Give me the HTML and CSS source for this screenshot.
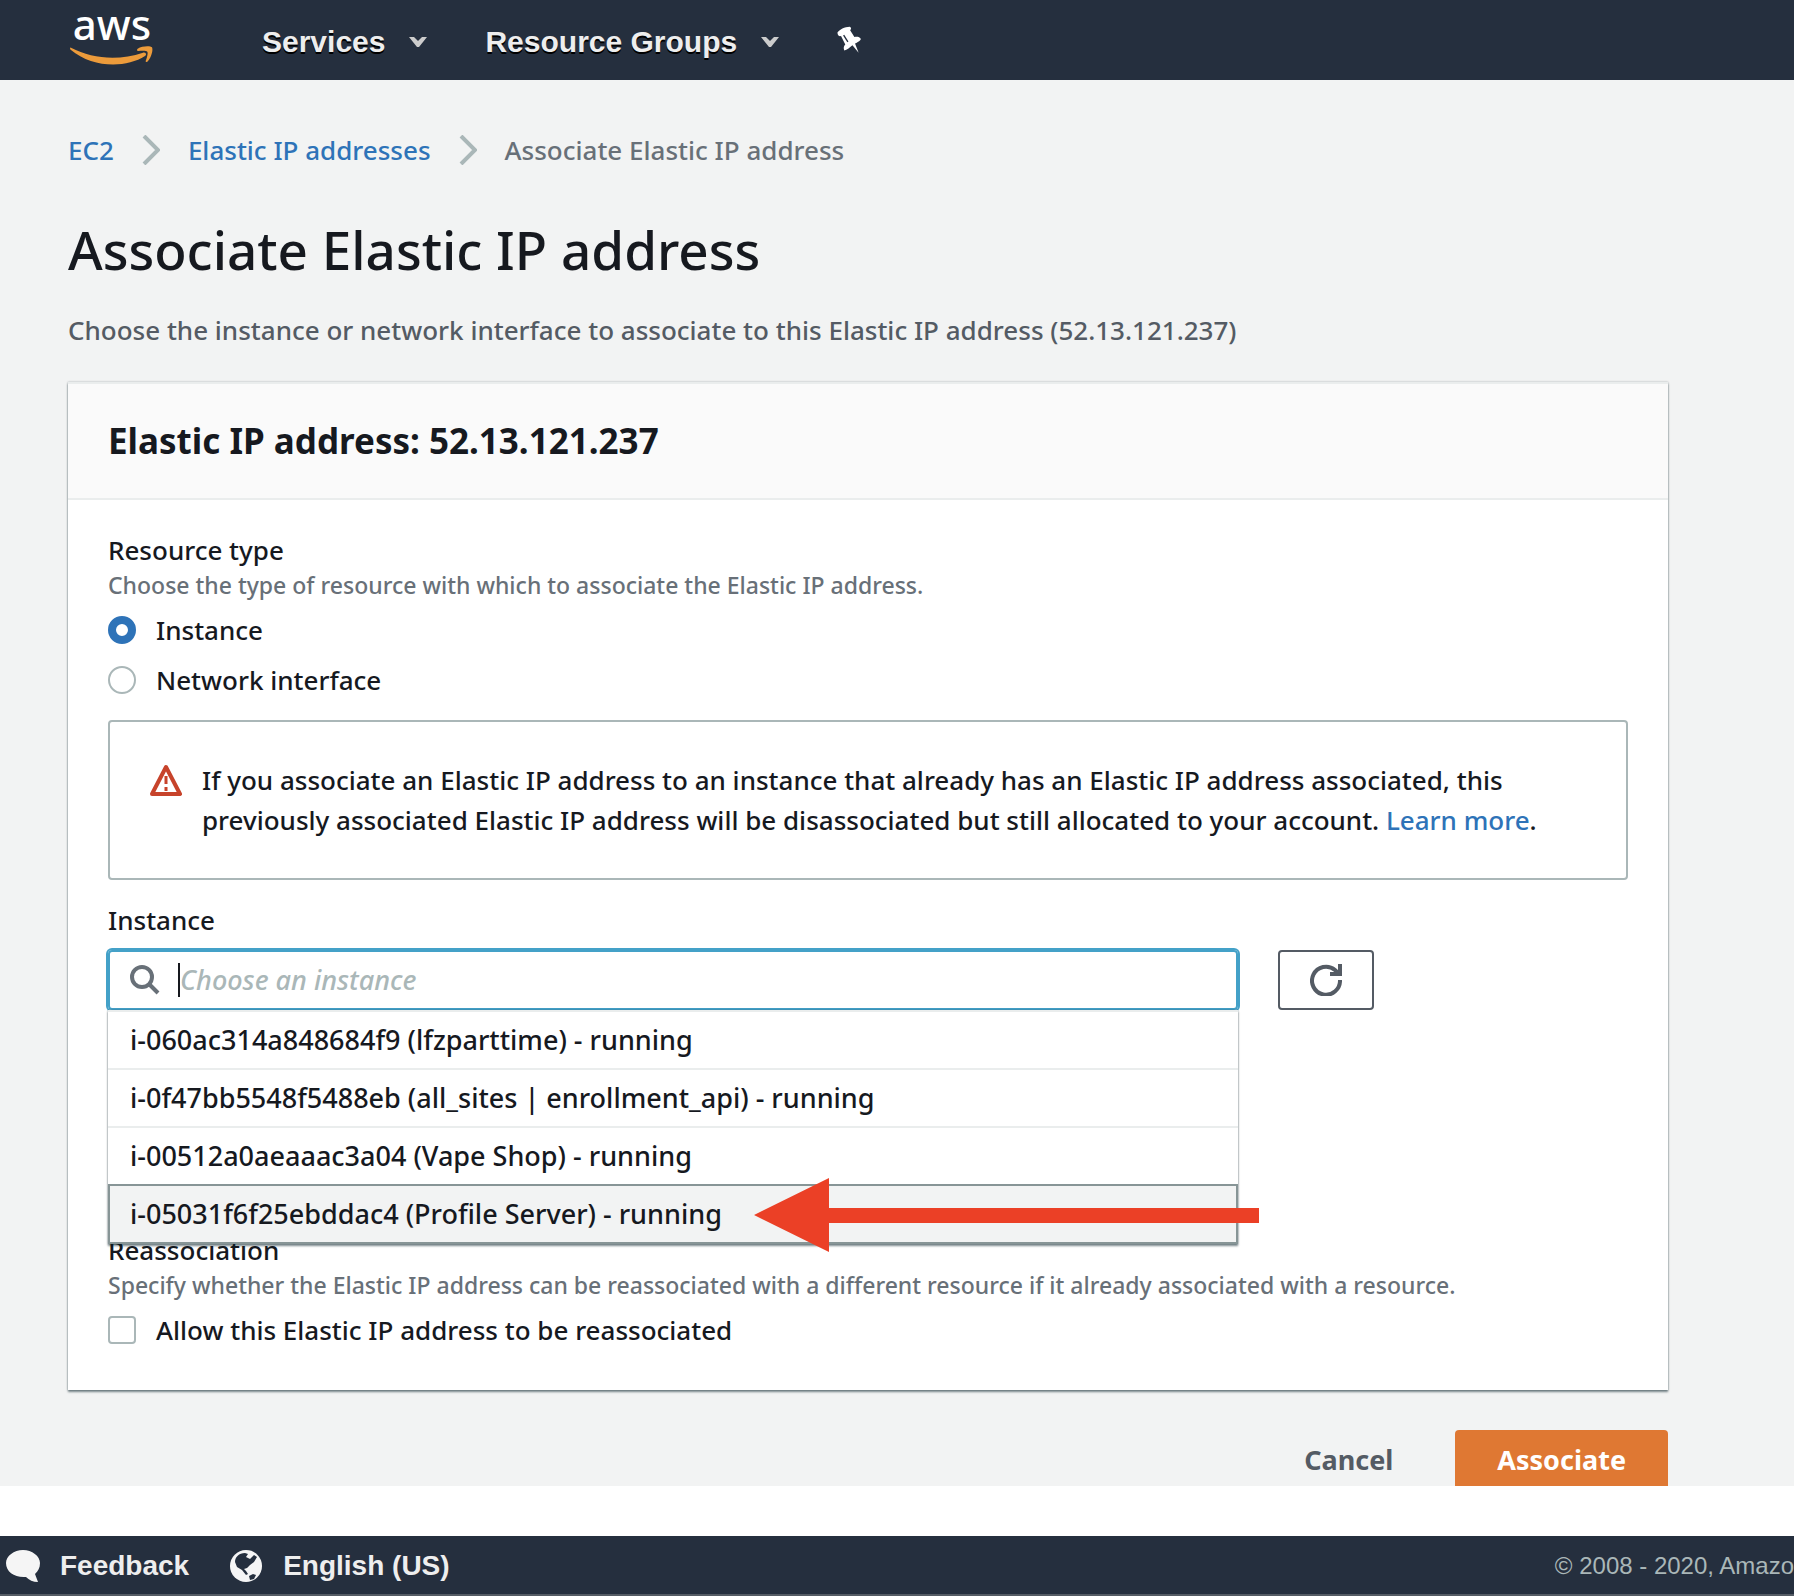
FILE: index.html
```html
<!DOCTYPE html>
<html lang="en">
<head>
<meta charset="utf-8">
<title>Associate Elastic IP address</title>
<link rel="stylesheet" href="styles.css">
</head>
<body>
<header class="topnav">
  <a class="logo" href="#" aria-label="aws">
    <span class="logo-word">aws</span>
    <svg class="logo-smile" viewBox="28 136 252 57" aria-hidden="true"><path d="M31 141C95 175 175 180 247 156c7-3 13 5 6 10C195 203 95 202 30 147c-3-3-2-7 1-6z"/><path d="M231 144c14-9 39-9 43-4 4 7-2 32-14 43-2 2-6 1-5-2 3-8 8-23 5-28-3-4-18-3-27-2-4 0-5-4-2-7z"/></svg>
  </a>
  <button class="nav-item" type="button">Services <svg class="caret" viewBox="0 0 18 12" aria-hidden="true"><path d="M0 1h5l4 4 4-4h5l-8 10H8z"/></svg></button>
  <button class="nav-item" type="button">Resource Groups <svg class="caret" viewBox="0 0 18 12" aria-hidden="true"><path d="M0 1h5l4 4 4-4h5l-8 10H8z"/></svg></button>
  <button class="pin" type="button" aria-label="Pin shortcuts"><svg viewBox="1346 48 76 86" aria-hidden="true"><path d="M1347 68c6-9 22-18 38-18 5 2 5 7 1 11l13 21c8-2 16-1 20 6-2 5-8 9-14 12l-4 2 11 28-19-23c-7 6-17 15-25 16-3-6-2-13 3-18l-13-26c-6 2-11-3-11-11z"/><path class="pin-line" d="M1366 76l13 21"/></svg></button>
</header>

<main class="content">
  <nav class="crumbs" aria-label="Breadcrumb">
    <a href="#">EC2</a>
    <svg class="chev" viewBox="0 0 18 30" aria-hidden="true"><path d="M2 1l14 14L2 29"/></svg>
    <a href="#">Elastic IP addresses</a>
    <svg class="chev" viewBox="0 0 18 30" aria-hidden="true"><path d="M2 1l14 14L2 29"/></svg>
    <span>Associate Elastic IP address</span>
  </nav>
  <h1>Associate Elastic IP address</h1>
  <p class="lead">Choose the instance or network interface to associate to this Elastic IP address (52.13.121.237)</p>

  <form class="form">
    <section class="card">
      <h2>Elastic IP address: 52.13.121.237</h2>
      <div class="card-body">
        <fieldset class="field">
          <legend>Resource type</legend>
          <p class="hint">Choose the type of resource with which to associate the Elastic IP address.</p>
          <label class="choice"><input type="radio" name="type" checked> Instance</label>
          <label class="choice"><input type="radio" name="type"> Network interface</label>
        </fieldset>

        <div class="alert">
          <svg class="warn" viewBox="0 0 32 32" aria-hidden="true"><path class="tri" d="M16 3L30 30H2z"/><path class="mark" d="M16 12v8M16 23v4"/></svg>
          <p>If you associate an Elastic IP address to an instance that already has an Elastic IP address associated, this previously associated Elastic IP address will be disassociated but still allocated to your account. <a href="#">Learn more</a>.</p>
        </div>

        <div class="field instance">
          <label for="instance">Instance</label>
          <div class="picker-row">
            <div class="picker">
              <div class="search">
                <svg class="glass" viewBox="0 0 30 30" aria-hidden="true"><circle cx="12" cy="12" r="10"/><path d="M19 19l9 9"/></svg>
                <span class="cursor"></span>
                <input id="instance" type="text" placeholder="Choose an instance">
              </div>
              <ul class="options">
                <li>i-060ac314a848684f9 (lfzparttime) - running</li>
                <li>i-0f47bb5548f5488eb (all_sites | enrollment_api) - running</li>
                <li>i-00512a0aeaaac3a04 (Vape Shop) - running</li>
                <li class="active">i-05031f6f25ebddac4 (Profile Server) - running
                  <svg class="arrow" viewBox="0 0 505 74" aria-hidden="true"><path d="M0 37L75 0v30h430v15H75v29z"/></svg>
                </li>
              </ul>
            </div>
            <button class="refresh" type="button" aria-label="Refresh"><svg viewBox="0 0 32 32" aria-hidden="true"><path d="M30 16a14 14 0 1 1-5-10l4 4"/><path d="M30 0v10H20"/></svg></button>
          </div>
        </div>

        <fieldset class="field reassoc">
          <legend>Reassociation</legend>
          <p class="hint">Specify whether the Elastic IP address can be reassociated with a different resource if it already associated with a resource.</p>
          <label class="choice"><input type="checkbox"> Allow this Elastic IP address to be reassociated</label>
        </fieldset>
      </div>
    </section>
    <div class="actions">
      <button class="btn" type="button">Cancel</button>
      <button class="btn primary" type="submit">Associate</button>
    </div>
  </form>
</main>

<footer class="footer">
  <a href="#"><svg class="ficon" viewBox="0 0 34 34" aria-hidden="true"><path d="M17 1c9 0 17 6 17 13 0 5-2 8-5 11l3 8c-5 0-9-2-12-5C9 29 0 23 0 14 0 7 8 1 17 1z"/></svg>Feedback</a>
  <a href="#"><svg class="ficon" viewBox="0 0 34 34" aria-hidden="true"><circle cx="17" cy="17" r="16"/><path class="land" d="M6 13c0-5 4-9 10-9l3 1-2 3 4 2 4-4 3 2-3 5-4 3-3 3-3 1 2 2 2 3-2 1-4-5-5-3zM20 27l4-2 3 1-2 4-4 1z"/></svg>English (US)</a>
  <small>© 2008 - 2020, Amazo</small>
</footer>
</body>
</html>
```
FILE: styles.css
```css
* { box-sizing: border-box; }

body {
  margin: 0;
  min-height: 100vh;
  display: flex;
  flex-direction: column;
  background: #fff;
  color: #16191f;
  font: 500 26px/40px "Noto Sans", "Open Sans", sans-serif;
  overflow-x: hidden;
}

h1, h2, p, ul, fieldset { margin: 0; padding: 0; border: 0; }
button, input { font: inherit; }
button { border: 0; background: none; padding: 0; cursor: pointer; }
a { color: #2e73b8; text-decoration: none; }

.topnav {
  display: flex;
  align-items: center;
  height: 80px;
  padding: 0 70px;
  background: #252f3e;
}
.logo { width: 84px; margin-right: 108px; padding-bottom: 14px; display: flex; flex-direction: column; align-items: center; }
.logo-word { color: #fff; font-size: 42px; line-height: 44px; }
.logo-smile { width: 84px; height: 19px; fill: #ec9b3b; }
.nav-item {
  display: flex;
  align-items: center;
  gap: 24px;
  margin-right: 58px;
  padding-top: 4px;
  color: #eee;
  font: bold 30px/32px "Liberation Sans", sans-serif;
  text-shadow: 0 2px 0 #000;
}
.caret { width: 18px; height: 12px; fill: #ccc; }
.pin { display: flex; }
.pin svg { width: 25px; height: 28px; fill: #fff; }
.pin-line { fill: none; stroke: #252f3e; stroke-width: 4; }

.content {
  flex: none;
  padding: 50px 68px 0;
  background: #f2f3f3;
}
.crumbs { display: flex; align-items: center; gap: 28px; color: #687078; }
.chev { width: 18px; height: 30px; fill: none; stroke: #aab7b8; stroke-width: 4; }
h1 { margin-top: 44px; font-size: 53px; line-height: 72px; font-weight: 500; }
.lead { margin-top: 24px; margin-bottom: 32px; color: #545b64; }

.form { max-width: 1600px; }
.card {
  background: #fff;
  border-top: 2px solid #eaeded;
  box-shadow: 0 2px 2px rgba(0, 28, 36, .5), 0 0 2px rgba(0, 28, 36, .3);
}
h2 {
  padding: 34px 40px;
  font-size: 35px;
  line-height: 46px;
  background: #fafafa;
  border-bottom: 2px solid #eaeded;
}
.card-body { padding: 30px 40px 40px; }
legend { padding: 0; }
.hint { color: #687078; font-size: 23px; line-height: 30px; }
.choice { display: flex; align-items: center; gap: 20px; margin-top: 10px; }
.choice input {
  appearance: none;
  width: 28px;
  height: 28px;
  margin: 0;
  border: 2px solid #aab7b8;
  border-radius: 4px;
  background: #fff;
}
.choice input[type="radio"] { border-radius: 50%; }
.choice input[type="radio"]:checked { border: 8px solid #2e73b8; }

.alert {
  display: flex;
  gap: 20px;
  margin-top: 20px;
  padding: 38px 40px;
  border: 2px solid #aab7b8;
  border-radius: 4px;
}
.warn { flex: none; width: 32px; height: 32px; margin-top: 4px; fill: none; stroke: #c7432b; stroke-width: 4; stroke-linejoin: round; }
.warn .mark { stroke-width: 3; }

.instance { margin-top: 20px; }
.instance label { display: block; }
.picker-row { display: flex; gap: 40px; margin-top: 10px; }
.picker { position: relative; flex: 0 1 1130px; font-size: 27px; }
.search {
  display: flex;
  align-items: center;
  height: 60px;
  padding: 0 20px;
  border: 2px solid #44a1c8;
  border-radius: 4px;
  box-shadow: 0 0 0 2px #44a1c8;
}
.glass { flex: none; width: 30px; height: 30px; margin-right: 18px; fill: none; stroke: #687078; stroke-width: 4; }
.cursor { width: 2px; height: 34px; background: #16191f; }
.search input { flex: 1; min-width: 0; padding: 0; border: 0; outline: 0; background: none; }
.search input::placeholder { color: #aab7b8; font-style: italic; opacity: 1; }
.options {
  position: absolute;
  z-index: 1;
  top: 100%;
  left: 0;
  right: 0;
  list-style: none;
  background: #fff;
  border-top: 2px solid #eaeded;
  box-shadow: 0 2px 2px rgba(0, 28, 36, .5), 0 0 2px rgba(0, 28, 36, .3);
}
.options li { position: relative; padding: 8px 22px; border-bottom: 2px solid #eaeded; }
.options .active { margin-top: -2px; padding: 8px 20px; background: #f2f3f3; border: 2px solid #879596; }
.arrow { position: absolute; left: 644px; top: -8px; width: 505px; height: 74px; fill: #eb4026; }
.refresh {
  display: flex;
  align-items: center;
  justify-content: center;
  width: 96px;
  height: 60px;
  border: 2px solid #545b64;
  border-radius: 4px;
}
.refresh svg { width: 32px; height: 32px; fill: none; stroke: #545b64; stroke-width: 4; }

.reassoc { margin-top: 220px; }

.actions { display: flex; justify-content: flex-end; height: 96px; padding-top: 40px; overflow: hidden; }
.btn { height: 60px; padding: 0 42px; font-size: 27px; font-weight: 700; color: #545b64; }
.btn.primary { margin-left: 20px; background: #df7833; color: #fff; border-radius: 4px; }

.footer {
  display: flex;
  align-items: center;
  height: 60px;
  margin-top: auto;
  padding: 2px 0 0 6px;
  background: #252f3e;
  border-bottom: 2px solid #545b64;
  font-family: "Liberation Sans", sans-serif;
  white-space: nowrap;
}
.footer a { display: flex; align-items: center; gap: 20px; margin-right: 40px; color: #eee; font-size: 28px; font-weight: 700; }
.ficon { width: 34px; height: 34px; fill: #f5f5f5; }
.land { fill: #252f3e; }
.footer small { margin-left: auto; color: #aab7b8; font-size: 24px; font-weight: 400; }
```
